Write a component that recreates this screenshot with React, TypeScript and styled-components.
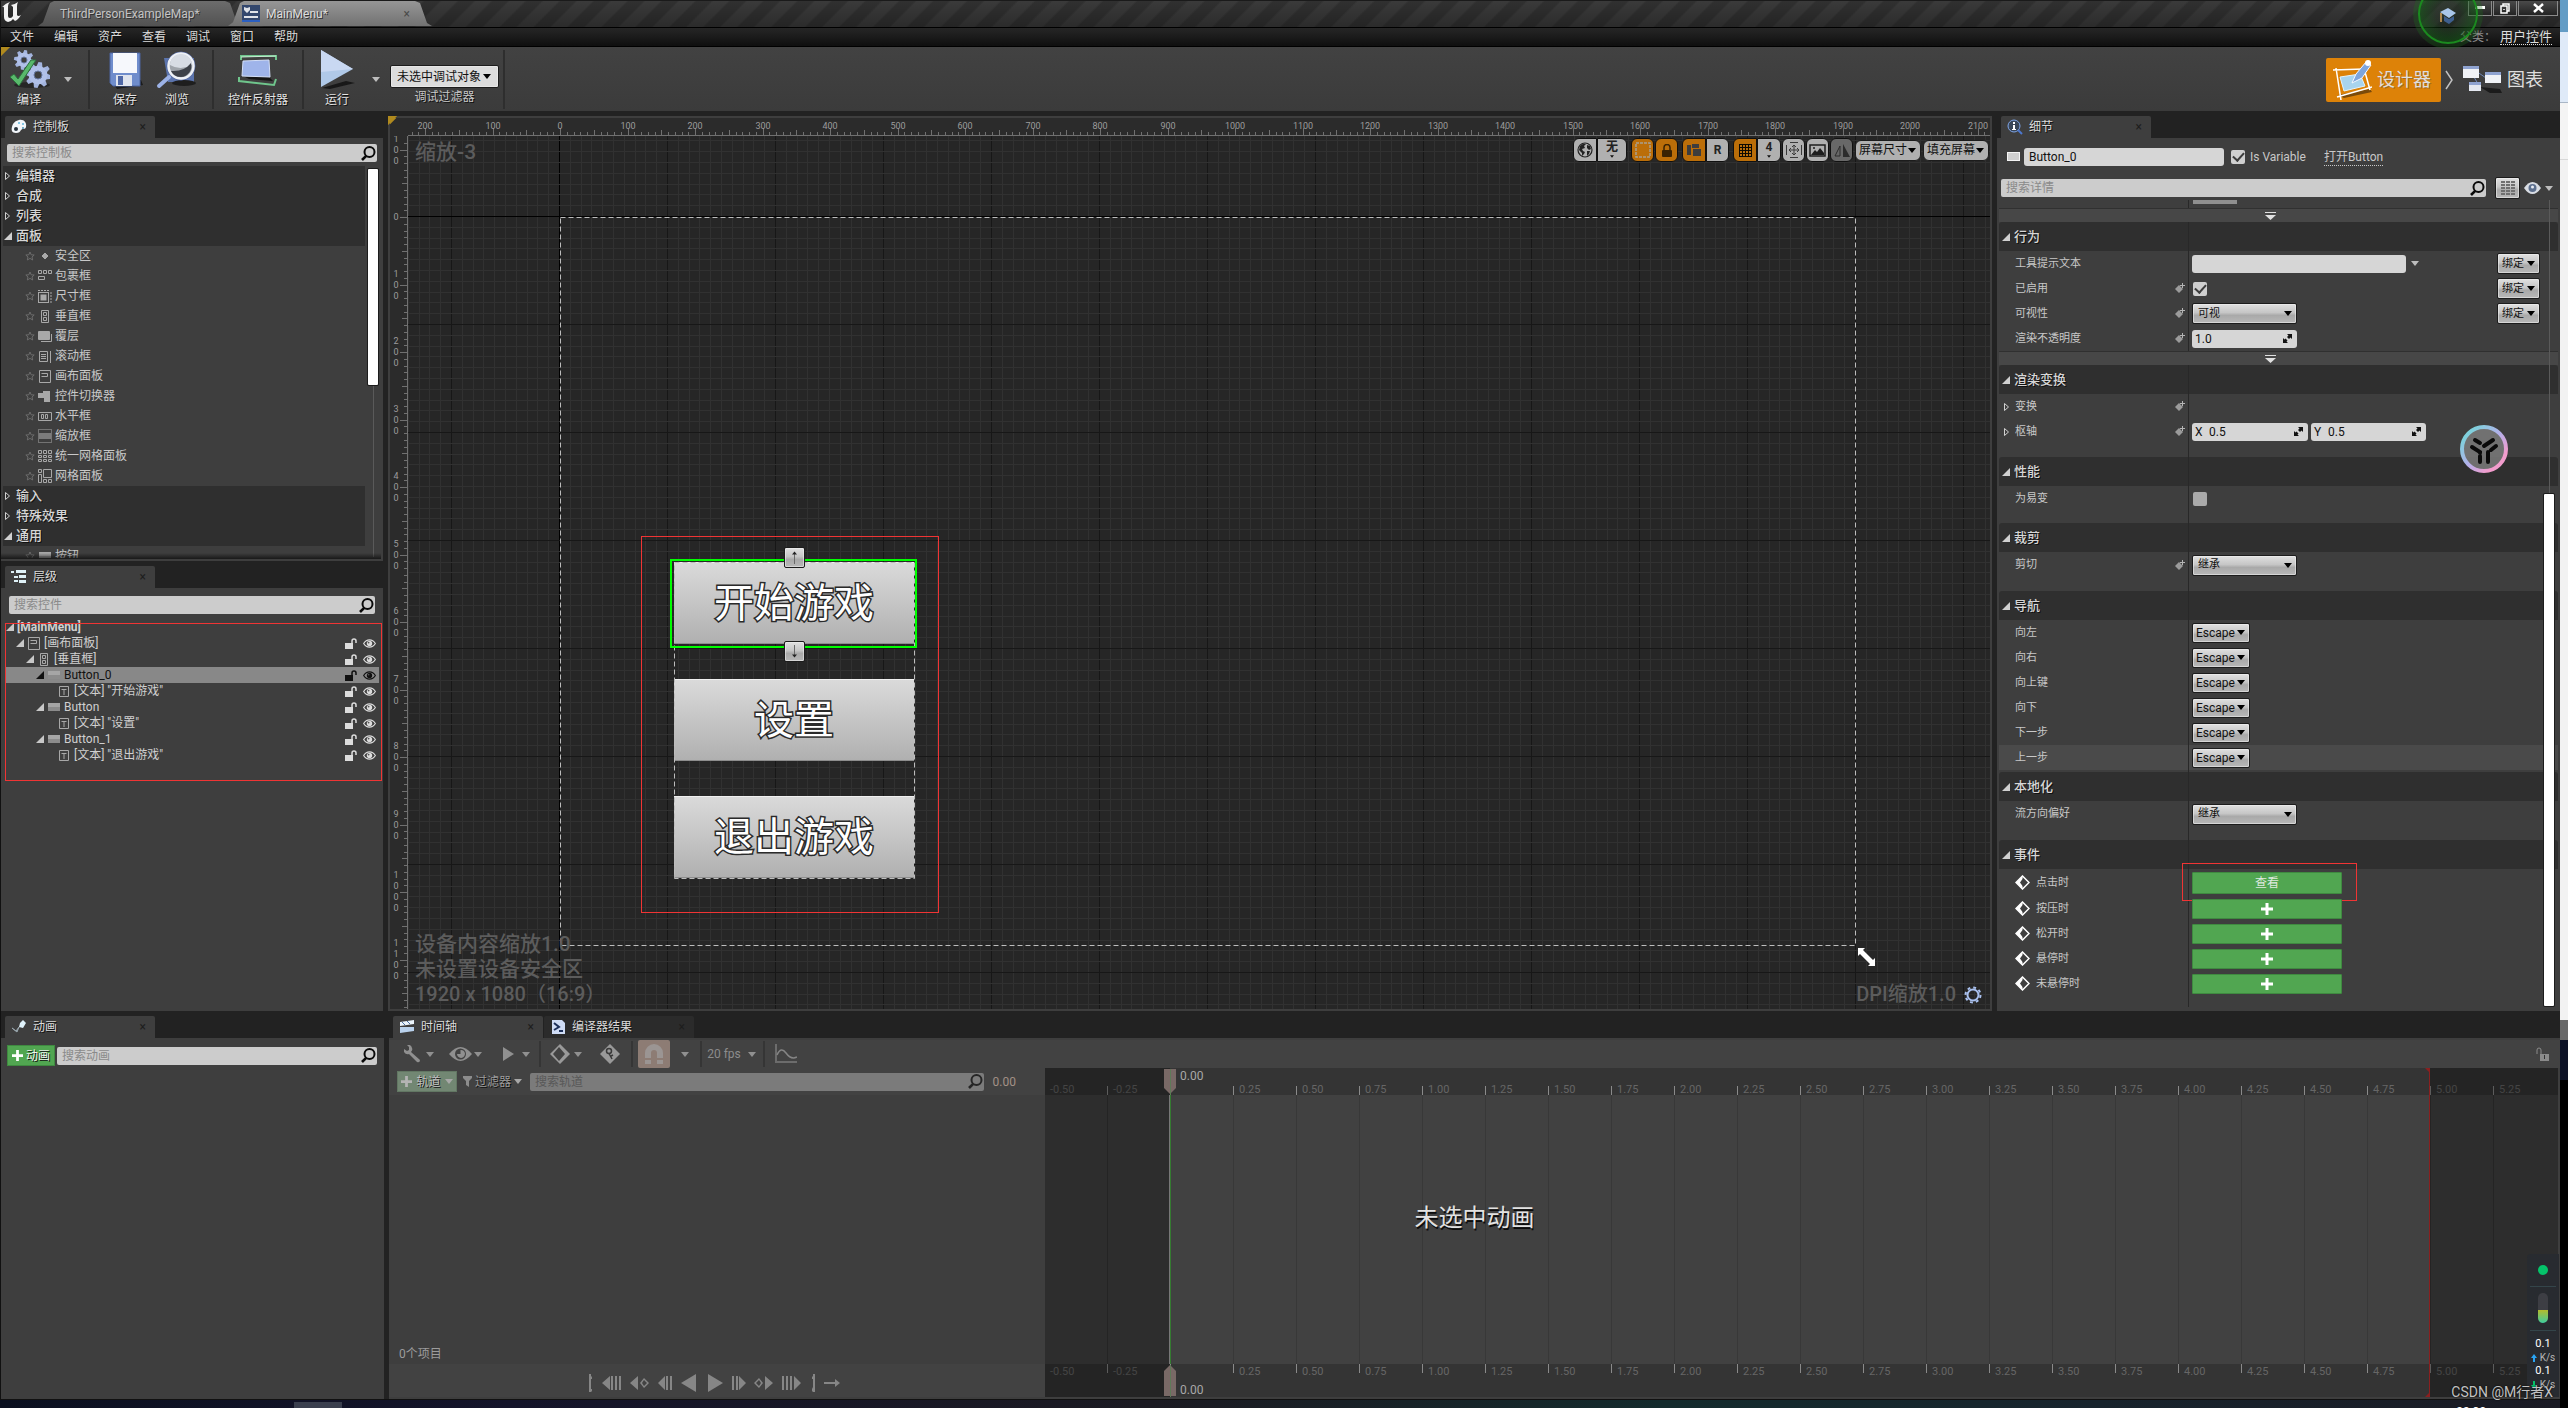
import React, { ReactNode } from "react";
import styled, { createGlobalStyle, css } from "styled-components";

const color = {
  gap: "#222222",
  panel: "#3e3e3e",
  section: "#2f2f2f",
  text: "#c8c8c8",
  bright: "#e4e4e4",
  field: "#cccccc",
  orange: "#dd8208",
  green: "#51a651",
  red: "#f03434",
};

const GlobalStyle = createGlobalStyle`
  * { box-sizing: border-box; }
  body { margin: 0; background: #000; overflow: hidden; }
  body, button, input, select {
    font-family: Roboto, "Noto Sans CJK SC", sans-serif;
    font-size: 12px;
    line-height: 16px;
    color: ${color.text};
  }
  button { padding: 0; border: 0; background: none; cursor: pointer; }
  ul { margin: 0; padding: 0; list-style: none; }
  svg { display: block; flex: none; }
`;

/* ---------- shared pieces ---------- */

const shadow = css`
  text-shadow: 1px 1px 0 #111;
`;

const raised = css`
  color: #111;
  background: linear-gradient(#e0e0e0, #c6c6c6 45%, #a9a9a9 60%, #b8b8b8);
  border: 1px solid #1c1c1c;
  border-radius: 2px;
  box-shadow: inset 0 0 0 1px rgba(240, 240, 240, 0.55);
`;

const Caret = ({ fill = "#bdbdbd", w = 8 }: { fill?: string; w?: number }) => (
  <svg width={w} height="5" viewBox="0 0 8 5">
    <path d="M0 0H8L4 5Z" fill={fill} />
  </svg>
);

const Expander = ({ open, fill = "#d0d0d0" }: { open?: boolean; fill?: string }) => (
  <svg width="8" height="8" viewBox="0 0 8 8">
    {open ? <path d="M8 0V8H0Z" fill={fill} /> : <path d="M1.5 .5V7.5L5.5 4Z" fill="none" stroke={fill} />}
  </svg>
);

const SearchShell = styled.label<{ $dim?: boolean }>`
  display: flex;
  align-items: center;
  flex: 1;
  min-width: 0;
  height: 18px;
  padding: 0 1px 0 5px;
  border-radius: 2px;
  background: ${(p) => (p.$dim ? "#7b7b7b" : color.field)};
  input {
    flex: 1;
    min-width: 0;
    height: 18px;
    padding: 0;
    border: 0;
    outline: 0;
    background: none;
  }
  input::placeholder {
    color: ${(p) => (p.$dim ? "#585858" : "#8a8a8a")};
    opacity: 1;
  }
`;

const Search = ({ hint, dim }: { hint: string; dim?: boolean }) => (
  <SearchShell $dim={dim}>
    <input type="text" placeholder={hint} aria-label={hint} />
    <svg width="15" height="15" viewBox="0 0 15 15" fill="none" stroke={dim ? "#262626" : "#0a0a0a"}>
      <circle cx="8.5" cy="6" r="5" strokeWidth="2" />
      <path d="M5.2 9.8L1 14" strokeWidth="2.6" />
    </svg>
  </SearchShell>
);

const SelectShell = styled.span<{ $w: number; $h: number; $pill?: boolean; $flat?: boolean }>`
  display: inline-grid;
  align-items: center;
  width: ${(p) => p.$w}px;
  height: ${(p) => p.$h}px;
  select {
    grid-area: 1 / 1;
    width: 100%;
    height: 100%;
    padding: 0 3px;
    appearance: none;
    ${raised}
    ${(p) => p.$flat && "background: #dcdcdc; padding: 0 6px;"}
    ${(p) => p.$pill && "background: #b0b0b0; border-radius: 6px; box-shadow: none;"}
  }
  svg {
    grid-area: 1 / 1;
    justify-self: end;
    margin-right: ${(p) => (p.$flat ? 8 : 5)}px;
    pointer-events: none;
  }
`;

type SelectProps = { label: string; value: string; w: number; h: number; pill?: boolean; flat?: boolean };
const Select = ({ label, value, w, h, pill, flat }: SelectProps) => (
  <SelectShell $w={w} $h={h} $pill={pill} $flat={flat}>
    <select aria-label={label} defaultValue={value}>
      <option>{value}</option>
    </select>
    <Caret fill="#000" />
  </SelectShell>
);

/* ---------- window frame ---------- */

const Desktop = styled.div`
  position: relative;
  display: grid;
  grid-template: minmax(0, 1fr) 9px / minmax(0, 1fr) 8px;
  height: 100vh;
  background: #000;
`;

const EdgeStrip = styled.div`
  grid-row: 1 / 3;
  grid-column: 2;
  background: linear-gradient(
    #639cc5 0 32px, #dfeaf8 32px 102px, #a9b6c6 102px 103px, #f4f4f4 103px 159px, #d8d8d8 159px 160px,
    #f2f2f2 160px 1020px, #686868 1020px 1040px, #0c1226 1040px 1080px, #000 1080px
  );
`;

const TaskStrip = styled.div`
  display: flex;
  justify-content: flex-end;
  height: 9px;
  overflow: hidden;
  border-top: 1px solid #111;
  color: #fff;
  padding: 4px 74px 0 0;
  background:
    linear-gradient(#3a3f4e, #3a3f4e) 294px 2px / 48px 7px no-repeat,
    linear-gradient(90deg, #0b1020, #14142a 20%, #1b1a22 45%, #132a2c 65%, #17232c 82%, #1a1a24);
`;

const Window = styled.div`
  display: flex;
  flex-direction: column;
  min-width: 0;
  min-height: 0;
  border-left: 1px solid #111;
  background: ${color.gap};
`;

const TitleBar = styled.header`
  display: flex;
  align-items: flex-start;
  height: 28px;
  border-bottom: 1px solid #000;
  background:
    linear-gradient(rgba(0, 0, 0, 0), rgba(0, 0, 0, 0.25)),
    repeating-linear-gradient(135deg, #3a3a3a 0 10px, #303030 12px 22px, #3a3a3a 24px);
  border-top: 1px solid #1a1a1a;
`;

const AppTab = styled.button<{ $on?: boolean }>`
  display: flex;
  align-items: center;
  gap: 6px;
  width: 204px;
  height: 25px;
  margin-left: ${(p) => (p.$on ? "-14px" : "14px")};
  padding: 0 22px 0 ${(p) => (p.$on ? "14px" : "22px")};
  color: ${(p) => (p.$on ? "#dcdcdc" : "#c4c4c4")};
  background: ${(p) => (p.$on ? "linear-gradient(#969696, #727272)" : "linear-gradient(#6c6c6c, #525252)")};
  clip-path: polygon(0 100%, 5px 85%, 12px 8%, 16px 0, 187px 0, 192px 8%, 199px 88%, 100% 100%);
  text-shadow: 1px 1px 0 #333;
  i { margin-left: auto; font-style: normal; color: #4a4a4a; text-shadow: none; }
`;

const WindowButtons = styled.div`
  display: flex;
  height: 15px;
  margin-left: auto;
  gap: 1px;
  margin-right: 2px;
  button {
    display: grid;
    place-items: center;
    width: 24px;
    height: 15px;
    border: 1px solid #8a8a8a;
    border-top: 0;
    background: linear-gradient(#4a4a4a, #232323);
  }
  button:last-child { width: 40px; }
`;

const Orb = styled.div`
  position: absolute;
  top: -16px;
  right: 90px;
  width: 60px;
  height: 60px;
  border: 2px solid #1b8a1f;
  border-radius: 50%;
  background: radial-gradient(circle, rgba(20, 60, 20, 0.2) 30%, rgba(20, 110, 24, 0.75));
  box-shadow: 0 0 0 5px rgba(30, 110, 30, 0.3);
  display: grid;
  place-items: center;
  padding-top: 4px;
  pointer-events: none;
`;

const MenuBar = styled.nav`
  display: flex;
  align-items: center;
  gap: 20px;
  height: 19px;
  padding: 0 8px 0 9px;
  background: linear-gradient(#262626, #0f0f0f);
  border-bottom: 1px solid #000;
  button { color: #dadada; height: 18px; ${shadow} }
`;

const ParentClass = styled.span`
  display: flex;
  margin-left: auto;
  color: #8c8c8c;
  a {
    margin-left: 4px;
    font-size: 13px;
    color: #dedede;
    text-decoration: none;
    border-bottom: 1px dotted #dedede;
    line-height: 15px;
  }
`;

/* ---------- main toolbar ---------- */

const MainBar = styled.div`
  display: flex;
  align-items: stretch;
  height: 64px;
  padding: 3px 13px 2px 0;
  background: linear-gradient(135deg, #b08a1e 6px, transparent 7px), linear-gradient(#424242, #3b3b3b);
`;

const ToolGroup = styled.div<{ $pad: string }>`
  display: flex;
  align-items: flex-start;
  padding: ${(p) => p.$pad};
  border-right: 2px solid #2e2e2e;
  &:last-of-type { border-right: 0; }
`;

const Tool = styled.button<{ $w: number }>`
  display: flex;
  flex-direction: column;
  align-items: center;
  gap: 2px;
  width: ${(p) => p.$w}px;
  color: ${color.bright};
  ${shadow}
`;

const DropArrow = styled.button`
  display: grid;
  place-items: center;
  width: 20px;
  height: 59px;
`;

const DebugFilter = styled.div`
  display: flex;
  flex-direction: column;
  align-items: center;
  gap: 1px;
  padding: 15px 0 0 4px;
  color: ${color.text};
  ${shadow}
`;

const Modes = styled.div`
  display: flex;
  align-items: center;
  margin-left: auto;
  button {
    display: flex;
    align-items: center;
    gap: 5px;
    height: 44px;
    font-size: 18px;
    line-height: 24px;
    color: #dedede;
    border-radius: 2px;
    text-shadow: 1px 1px 0 #4446;
  }
  button:first-child { width: 115px; padding-left: 6px; background: ${color.orange}; margin-right: 4px; }
  button:last-child { margin-left: 9px; padding-right: 4px; }
`;

const GearShape = ({ x, y, r, hole }: { x: number; y: number; r: number; hole: number }) => (
  <g transform={`translate(${x} ${y})`}>
    {[10, 55, 100, 145].map((a) => (
      <path
        key={a}
        d={`M${-r * 0.14} ${-r}H${r * 0.14}L${r * 0.24} ${-r * 0.6}V${r * 0.6}L${r * 0.14} ${r}H${-r * 0.14}L${-r * 0.24} ${r * 0.6}V${-r * 0.6}Z`}
        fill="#a3b4de"
        transform={`rotate(${a})`}
      />
    ))}
    <circle r={r * 0.72} fill="#b0c0e8" />
    <circle r={hole} fill="#3e3e3e" stroke="#66779f" />
  </g>
);

const CompileIcon = () => (
  <svg width="42" height="40" viewBox="0 0 42 40">
    <ellipse cx="24" cy="35" rx="18" ry="3" fill="#262626" />
    <GearShape x={16} y={10} r={10} hole={3} />
    <GearShape x={30} y={25} r={13} hole={4} />
    <path d="M2 27L6 24L10 29L23 10L28 10L11 36Z" fill="#58b96b" stroke="#2c6f3c" />
  </svg>
);
const SaveIcon = () => (
  <svg width="36" height="40" viewBox="0 0 36 40">
    <path d="M6 33L34 30L36 35L10 39Z" fill="#1c1c1c" />
    <path d="M3 3H33V36H6L3 33Z" fill="#6f8dcc" stroke="#4c64a0" />
    <rect x="6" y="3" width="24" height="20" fill="#f6f8fc" />
    <rect x="9" y="25" width="16" height="11" fill="#dfe4ee" />
    <rect x="11" y="26" width="5" height="9" fill="#4f68a6" />
  </svg>
);
const BrowseIcon = () => (
  <svg width="42" height="40" viewBox="0 0 42 40">
    <path d="M8 8H38V32H12Z" fill="#5b74ad" />
    <ellipse cx="28" cy="33" rx="12" ry="3" fill="#1e1e1e" />
    <circle cx="25" cy="16" r="14" fill="#8d9299" stroke="#4c62a0" />
    <circle cx="25" cy="16" r="12.500" fill="#9fa4ab" stroke="#eef1f6" strokeWidth="2.500" />
    <path d="M14 15A11 11 0 0 1 36 15Q24 21 14 15Z" fill="#d7dce4" />
    <path d="M15 21Q28 22 35 13A11 11 0 0 1 25 27Q18 27 15 21Z" fill="#3d4148" />
    <path d="M13 27L3 36" stroke="#9cb2e6" strokeWidth="4" strokeLinecap="round" />
  </svg>
);
const ReflectorIcon = () => (
  <svg width="42" height="40" viewBox="0 0 42 40" fill="none">
    <path d="M8 27L32 27L36 31L12 29Z" fill="#151515" />
    <path d="M4 10V6H39V10" stroke="#6fc58c" strokeWidth="2" />
    <path d="M4 7L39 6" stroke="#c8ecd4" />
    <path d="M2 27V31L37 35L39 29" stroke="#6fc58c" strokeWidth="2" />
    <path d="M6 11L32 10L33 27L5 26Z" fill="#9fb4ea" stroke="#d4dff8" />
  </svg>
);
const PlayIcon = () => (
  <svg width="42" height="40" viewBox="0 0 42 40">
    <path d="M6 38L30 31L39 33L14 39Z" fill="#181818" />
    <path d="M5 0L37 19L5 37Z" fill="#b0c9e8" />
    <path d="M5 0L37 19L5 22Z" fill="#c9d8f2" />
  </svg>
);
const DesignerIcon = () => (
  <svg width="40" height="40" viewBox="0 0 40 40" fill="none">
    <path d="M6 35L38 29L40 32L12 38Z" fill="#7a4a0a" />
    <path d="M1 10L32 9M5 37L40 27M4 8L9 40M33 12L38 30" stroke="#fff" strokeWidth="1.500" />
    <path d="M8 17L28 14L33 26L12 31Z" fill="#a8d4ee" stroke="#e2f3fc" />
    <path d="M20 23L24 14L34 2L39 5L30 18Z" fill="#7ea5dc" stroke="#f6f9ff" />
    <circle cx="36" cy="3" r="3" fill="#fff" />
  </svg>
);
const GraphIcon = () => (
  <svg width="40" height="30" viewBox="0 0 40 30">
    <path d="M18 22L38 24L40 28L28 28Z" fill="#1b1b1b" />
    <path d="M14 6L24 13M12 12L16 19" stroke="#6f87b8" />
    <rect x="1" y="1" width="16" height="12" fill="#f0f2f6" />
    <rect x="1" y="1" width="16" height="3" fill="#8fa3d0" />
    <rect x="23" y="7" width="16" height="11" fill="#f0f2f6" />
    <rect x="23" y="7" width="16" height="3" fill="#8fa3d0" />
    <rect x="7" y="17" width="12" height="9" fill="#e4e8f0" />
    <rect x="7" y="17" width="12" height="3" fill="#8fa3d0" />
  </svg>
);

/* ---------- docked panels ---------- */

const Workspace = styled.main`
  display: flex;
  flex-direction: column;
  flex: 1;
  min-height: 0;
  gap: 5px;
  padding-top: 5px;
`;

const UpperRow = styled.div`
  display: grid;
  grid-template-columns: 382px minmax(0, 1fr) 563px;
  gap: 5px;
  flex: 1;
  min-height: 0;
`;

const LowerRow = styled.div`
  display: grid;
  grid-template-columns: 383px minmax(0, 1fr);
  gap: 5px;
  height: 383px;
`;

const LeftStack = styled.div`
  display: grid;
  grid-template-rows: 1fr 1fr;
  gap: 5px;
  min-height: 0;
`;

const Dock = styled.section`
  display: flex;
  flex-direction: column;
  min-width: 0;
  min-height: 0;
`;

const DockTabs = styled.div`
  display: flex;
  gap: 1px;
  padding-left: 4px;
`;

const DockTab = styled.button<{ $off?: boolean }>`
  display: flex;
  align-items: center;
  gap: 6px;
  width: 150px;
  height: 22px;
  padding: 0 9px 0 6px;
  color: #dadada;
  border-radius: 2px 2px 0 0;
  background: ${(p) => (p.$off ? "#2b2b2b" : color.panel)};
  ${shadow}
  i { margin-left: auto; font-style: normal; color: #1d1d1d; text-shadow: none; }
`;

const DockBody = styled.div`
  position: relative;
  display: flex;
  flex-direction: column;
  flex: 1;
  min-height: 0;
  background: ${color.panel};
`;

const TabIcon = ({ kind }: { kind: string }) => (
  <svg width="16" height="16" viewBox="0 0 16 16">
    {kind === "palette" && (
      <g>
        <path d="M8 1C13 0 16 4 15 8C14 11 12 9 10 11C9 13 8 14 5 14C1 14 0 11 1 8C2 4 4 2 8 1Z" fill="#f2f6fa" />
        <circle cx="5" cy="10" r="2" fill="#28353f" />
        <circle cx="8" cy="4" r="1" fill="#5fb6dc" />
        <circle cx="12" cy="5" r="1" fill="#5fb6dc" />
        <circle cx="12" cy="9" r="1" fill="#4a8fb0" />
      </g>
    )}
    {kind === "tree" && (
      <g fill="#dff1f7">
        <path d="M0 2H3V4H0ZM5 1H15V4H5ZM3 7H7V9H3ZM8 6H15V9H8ZM3 11H7V13H3ZM8 11H15V14H8Z" />
      </g>
    )}
    {kind === "anim" && (
      <g>
        <path d="M1 9L6 13L8 8L5 12Z" fill="#98a5ac" stroke="#98a5ac" />
        <path d="M9 4L12 1L15 4L12 9L8 8Z" fill="#dff2fa" />
      </g>
    )}
    {kind === "clip" && (
      <g>
        <path d="M1 3L15 1V5L1 7Z" fill="#eaf3fb" />
        <path d="M3 3L6 6M8 2L11 5" stroke="#4b6fa0" />
        <path d="M1 8H15V12L1 14Z" fill="#b9d1ec" />
      </g>
    )}
    {kind === "results" && (
      <g>
        <path d="M2 1H12L15 4V15H2Z" fill="#cfdcf5" />
        <path d="M4 4L9 8L4 11M9 12H13" stroke="#1c2f5a" strokeWidth="2" fill="none" />
      </g>
    )}
    {kind === "details" && (
      <g>
        <circle cx="7" cy="7" r="6" fill="#3a4657" stroke="#7ea5e8" />
        <path d="M11 11L15 15" stroke="#4d78d0" strokeWidth="2" />
        <path d="M6 3H8V5H6ZM6 6H8V10H9V11H5V10H6Z" fill="#fff" />
      </g>
    )}
  </svg>
);

const Tab = ({ icon, children, off }: { icon: string; children: ReactNode; off?: boolean }) => (
  <DockTab $off={off}>
    <TabIcon kind={icon} />
    {children}
    <i>×</i>
  </DockTab>
);

const SearchRow = styled.div<{ $pad: string }>`
  display: flex;
  align-items: center;
  gap: 2px;
  padding: ${(p) => p.$pad};
`;

/* ---------- palette ---------- */

const PaletteList = styled.ul`
  flex: 1;
  min-height: 0;
  overflow: hidden;
  margin: 0 18px 3px 2px;
`;

const PaletteGroup = styled.li`
  display: flex;
  align-items: center;
  gap: 4px;
  height: 20px;
  padding-left: 1px;
  background: ${color.section};
  font-size: 13px;
  font-weight: 500;
  color: #d6d6d6;
  ${shadow}
`;

const PaletteItem = styled.li`
  display: flex;
  align-items: center;
  gap: 3px;
  height: 20px;
  padding-left: 22px;
`;

const ScrollTrack = styled.div<{ $top: number; $bottom: number; $right: number }>`
  position: absolute;
  top: ${(p) => p.$top}px;
  bottom: ${(p) => p.$bottom}px;
  right: ${(p) => p.$right}px;
  width: 10px;
  background: linear-gradient(#5a5a5a, #5a5a5a) 5px 0 / 1px 100% no-repeat;
`;

const ScrollThumb = styled.div<{ $size: string; $end?: boolean }>`
  position: absolute;
  left: 0;
  right: 0;
  ${(p) => (p.$end ? "bottom: 0;" : "top: 0;")}
  height: ${(p) => p.$size};
  background: #fff;
  border-radius: 1px;
  box-shadow: 0 0 0 1px #1c1c1c;
`;

const FadeEdge = styled.div`
  position: absolute;
  left: 0;
  right: 2px;
  bottom: 2px;
  height: 6px;
  background: linear-gradient(transparent, rgba(0, 0, 0, 0.6));
`;

const glyphs: Record<string, ReactNode> = {
  safe: <path d="M7 4L10 7L7 10L4 7Z" fill="#a8a8a8" />,
  wrap: <path d="M.5 1.5H3.5V4.5H.5ZM5.5 1.5H8.5V4.5H5.5ZM10.5 1.5H13.5V4.5H10.5ZM.5 7.5H6.5V10.5H.5Z" />,
  size: (
    <g>
      <rect x=".5" y="3.5" width="10" height="10" />
      <rect x="3" y="6" width="5" height="5" fill="#a8a8a8" />
      <path d="M0 1.5H11M13 3V14" strokeDasharray="2 1" />
    </g>
  ),
  vbox: <path d="M3.5 1.5H10.5V13.5H3.5ZM5.5 3.5H8.5V6.5H5.5ZM5.5 8.5H8.5V11.5H5.5Z" />,
  overlay: (
    <g>
      <rect x="0" y="2" width="12" height="9" rx="1" fill="#a8a8a8" stroke="none" />
      <path d="M13.5 5V12.5H3" />
    </g>
  ),
  scroll: <path d="M1.5 2.5H9.5V12.5H1.5ZM3 5.5H8M3 7.5H8M3 9.5H8M12.5 2V14" />,
  canvas: <path d="M1.5 1.5H12.5V13.5H1.5ZM3.5 4.5H9.5V7.5H3.5" />,
  switcher: <path d="M5 2H12V13H6V9H0V4H5Z" fill="#a8a8a8" stroke="none" />,
  hbox: <path d="M.5 3.5H13.5V11.5H.5ZM3.5 5.5H5.5V9.5H3.5ZM7.5 5.5H9.5V9.5H7.5Z" />,
  scale: (
    <g>
      <rect x=".5" y=".5" width="13" height="13" strokeDasharray="1 1" />
      <rect x="1" y="4" width="12" height="6" fill="#7c7c7c" stroke="none" />
    </g>
  ),
  uniform: (
    <path d="M.5 1.5H3.5V4.5H.5ZM5.5 1.5H8.5V4.5H5.5ZM10.5 1.5H13.5V4.5H10.5ZM.5 6.5H3.5V8.5H.5ZM5.5 6.5H8.5V8.5H5.5ZM10.5 6.5H13.5V8.5H10.5ZM.5 10.5H3.5V12.5H.5ZM5.5 10.5H8.5V12.5H5.5ZM10.5 10.5H13.5V12.5H10.5Z" />
  ),
  grid: <path d="M.5 .5H3.5V3.5H.5ZM5.5 .5H13.5V8.5H5.5ZM.5 5.5H3.5V13.5H.5ZM5.5 10.5H8.5V13.5H5.5ZM10.5 10.5H13.5V13.5H10.5Z" />,
  button: (
    <g stroke="none">
      <rect x="1" y="3" width="12" height="8" fill="#8c8c8c" />
      <rect x="1" y="3" width="12" height="4" fill="#a6a6a6" />
    </g>
  ),
  text: <path d="M2.5 2.5H11.5V12.5H2.5ZM4.5 5.5H9.5M7 5.5V11" />,
};

const Glyph = ({ kind }: { kind: string }) => (
  <svg width="14" height="14" viewBox="0 0 14 14" fill="none" stroke="#a8a8a8">
    {glyphs[kind]}
  </svg>
);

const Star = () => (
  <svg width="10" height="10" viewBox="0 0 10 10" fill="none" stroke="#6c6c6c">
    <path d="M5 1L6.2 3.8L9.2 4L7 6L7.7 9L5 7.4L2.3 9L3 6L.8 4L3.8 3.8Z" />
  </svg>
);

const paletteItems: [string, string][] = [
  ["safe", "安全区"],
  ["wrap", "包裹框"],
  ["size", "尺寸框"],
  ["vbox", "垂直框"],
  ["overlay", "覆层"],
  ["scroll", "滚动框"],
  ["canvas", "画布面板"],
  ["switcher", "控件切换器"],
  ["hbox", "水平框"],
  ["scale", "缩放框"],
  ["uniform", "统一网格面板"],
  ["grid", "网格面板"],
];

const PaletteEntry = ({ icon, name }: { icon: string; name: string }) => (
  <PaletteItem>
    <Star />
    <Glyph kind={icon} />
    {name}
  </PaletteItem>
);

const Palette = () => (
  <Dock>
    <DockTabs>
      <Tab icon="palette">控制板</Tab>
    </DockTabs>
    <DockBody>
      <SearchRow $pad="6px 6px 4px 6px">
        <Search hint="搜索控制板" />
      </SearchRow>
      <PaletteList>
        {["编辑器", "合成", "列表"].map((n) => (
          <PaletteGroup key={n}>
            <Expander />
            {n}
          </PaletteGroup>
        ))}
        <PaletteGroup>
          <Expander open />
          面板
        </PaletteGroup>
        {paletteItems.map(([icon, name]) => (
          <PaletteEntry key={name} icon={icon} name={name} />
        ))}
        {["输入", "特殊效果"].map((n) => (
          <PaletteGroup key={n}>
            <Expander />
            {n}
          </PaletteGroup>
        ))}
        <PaletteGroup>
          <Expander open />
          通用
        </PaletteGroup>
        <PaletteEntry icon="button" name="按钮" />
      </PaletteList>
      <ScrollTrack $top={31} $bottom={4} $right={5}>
        <ScrollThumb $size="216px" />
      </ScrollTrack>
      <FadeEdge />
    </DockBody>
  </Dock>
);

/* ---------- hierarchy ---------- */

const Tree = styled.ul`
  padding: 0 4px 0 5px;
`;

const TreeRow = styled.li<{ $level: number; $on?: boolean }>`
  display: flex;
  align-items: center;
  gap: 3px;
  height: 16px;
  padding: 0 3px 0 ${(p) => p.$level * 10}px;
  color: ${(p) => (p.$on ? "#111" : "#d0d0d0")};
  background: ${(p) => (p.$on ? "#888888" : "none")};
  font-weight: ${(p) => (p.$level === 0 ? 700 : 400)};
  > span:first-child { width: 8px; }
  > div { display: flex; gap: 6px; margin-left: auto; }
`;

const Highlight = styled.div<{ $inset: string }>`
  position: absolute;
  inset: ${(p) => p.$inset};
  border: 1px solid ${color.red};
  pointer-events: none;
`;

const Lock = ({ fill }: { fill: string }) => (
  <svg width="12" height="11" viewBox="0 0 12 11">
    <rect x="0" y="5" width="8" height="6" fill={fill} />
    <path d="M7 6V3A2 2 0 0 1 11 3V5" fill="none" stroke={fill} strokeWidth="1.5" />
  </svg>
);
const Eye = ({ fill }: { fill: string }) => (
  <svg width="13" height="9" viewBox="0 0 14 10">
    <path d="M.5 5Q3 1 7 1T13.5 5Q11 9 7 9T.5 5Z" fill="none" stroke={fill} strokeWidth="1.3" />
    <circle cx="7" cy="5" r="3" fill={fill} />
    <circle cx="6" cy="4" r="1" fill="#555" />
  </svg>
);

type Node = { level: number; label: string; icon?: string; leaf?: boolean; on?: boolean };
const nodes: Node[] = [
  { level: 0, label: "[MainMenu]" },
  { level: 1, label: "[画布面板]", icon: "canvas" },
  { level: 2, label: "[垂直框]", icon: "vbox" },
  { level: 3, label: "Button_0", icon: "button", on: true },
  { level: 4, label: "[文本] \"开始游戏\"", icon: "text", leaf: true },
  { level: 3, label: "Button", icon: "button" },
  { level: 4, label: "[文本] \"设置\"", icon: "text", leaf: true },
  { level: 3, label: "Button_1", icon: "button" },
  { level: 4, label: "[文本] \"退出游戏\"", icon: "text", leaf: true },
];

const IconButton = styled.button`
  display: grid;
  place-items: center;
  min-width: 12px;
  height: 14px;
`;

const Hierarchy = () => (
  <Dock>
    <DockTabs>
      <Tab icon="tree">层级</Tab>
    </DockTabs>
    <DockBody>
      <SearchRow $pad="8px 8px 5px 8px">
        <Search hint="搜索控件" />
      </SearchRow>
      <Tree>
        {nodes.map((n, i) => {
          const ink = n.on ? "#111" : "#dcdcdc";
          return (
            <TreeRow key={i} $level={n.level} $on={n.on}>
              <span>{!n.leaf && <Expander open fill={n.on ? "#111" : "#c8c8c8"} />}</span>
              {n.icon && <Glyph kind={n.icon} />}
              {n.label}
              {n.level > 0 && (
                <div>
                  <IconButton aria-label="锁定">
                    <Lock fill={ink} />
                  </IconButton>
                  <IconButton aria-label="可视">
                    <Eye fill={ink} />
                  </IconButton>
                </div>
              )}
            </TreeRow>
          );
        })}
      </Tree>
      <Highlight $inset="35px 1px auto 4px" style={{ height: nodes.length * 16 + 14 }} />
    </DockBody>
  </Dock>
);

/* ---------- designer viewport ---------- */

const SCALE = 0.675;
const ORIGIN_X = 152;
const ORIGIN_Y = 81;

const ViewportFrame = styled.section`
  display: grid;
  grid-template: 18px minmax(0, 1fr) / 18px minmax(0, 1fr);
  padding: 2px;
  min-width: 0;
  min-height: 0;
  background: linear-gradient(135deg, #b08a1e 6px, transparent 7px), #3e3e3e;
  > svg { background: #2b2b2b; width: 100%; height: 100%; overflow: hidden; }
`;

const Corner = styled.div`
  background: linear-gradient(135deg, #b08a1e 4px, #2b2b2b 5px);
`;

const Surface = styled.div`
  position: relative;
  overflow: hidden;
  background: #262626;
`;

const GridDrawing = styled.svg`
  position: absolute;
  inset: 0;
  width: 100%;
  height: 100%;
`;

const range = (from: number, to: number) => Array.from({ length: to - from + 1 }, (_, i) => from + i);

const TopRuler = () => (
  <svg>
    {range(-22, 360).map((i) => {
      const x = Math.round(ORIGIN_X + i * 10 * SCALE);
      const h = i % 10 === 0 ? 7 : i % 5 === 0 ? 5 : 3;
      return <rect key={i} x={x} y={17 - h} width="1" height={h} fill="#707070" />;
    })}
    <rect x="0" y="17" width="100%" height="1" fill="#707070" />
    {range(-2, 21).map((i) => (
      <text key={i} x={Math.round(ORIGIN_X + i * 100 * SCALE)} y="11" fontSize="9" textAnchor="middle" fill="#9c9c9c">
        {Math.abs(i * 100)}
      </text>
    ))}
  </svg>
);

const SideRuler = () => (
  <svg>
    {range(-11, 220).map((i) => {
      const y = Math.round(ORIGIN_Y + i * 10 * SCALE);
      const w = i % 10 === 0 ? 7 : i % 5 === 0 ? 5 : 3;
      return <rect key={i} x={17 - w} y={y} width={w} height="1" fill="#707070" />;
    })}
    <rect x="17" y="0" width="1" height="100%" fill="#707070" />
    {range(-1, 11).map((i) => {
      const digits = String(Math.abs(i * 100)).split("");
      const mid = Math.round(ORIGIN_Y + i * 100 * SCALE) - Math.round((digits.length - 1) * 5.5) + 3;
      return digits.map((d, k) => (
        <text key={`${i}.${k}`} x="6" y={mid + k * 11} fontSize="9" textAnchor="middle" fill="#9c9c9c">
          {d}
        </text>
      ));
    })}
  </svg>
);

const GridLines = () => {
  const lines = (origin: number, count: number, vertical: boolean) =>
    range(-14, count)
      .sort((a, b) => Number(a % 10 === 0) - Number(b % 10 === 0))
      .map((i) => {
        const at = Math.round(origin + i * 16 * SCALE) - 1;
        const fill = i === 0 ? "#000" : i % 10 === 0 ? "#171717" : "#313131";
        return vertical ? (
          <rect key={`v${i}`} x={at} y="0" width="1" height="100%" fill={fill} />
        ) : (
          <rect key={`h${i}`} x="0" y={at} width="100%" height="1" fill={fill} />
        );
      });
  return (
    <GridDrawing aria-hidden>
      {lines(ORIGIN_X, 300, true)}
      {lines(ORIGIN_Y, 140, false)}
    </GridDrawing>
  );
};

const Stage = styled.div`
  position: absolute;
  left: ${ORIGIN_X}px;
  top: ${ORIGIN_Y}px;
  width: 1295px;
  height: 728px;
`;

const Dashes = () => (
  <GridDrawing aria-hidden>
    <rect x="0.5" y="0.5" width="100%" height="100%" fill="none" stroke="#bdbdbd" strokeDasharray="5 3" />
  </GridDrawing>
);
const DashFrame = styled.div`
  position: absolute;
  inset: 0;
  pointer-events: none;
  svg { overflow: visible; }
`;

const MenuBox = styled.div`
  position: absolute;
  left: 114px;
  top: 345px;
  width: 240px;
  display: grid;
  gap: 35px;
`;

const GameButton = styled.button`
  height: 82px;
  padding-top: 2px;
  font-size: 40px;
  line-height: 48px;
  color: #fff;
  -webkit-text-stroke: 3px #2a2a2a;
  paint-order: stroke fill;
  background: linear-gradient(#dadada, #d2d2d2 20%, #b0b0b0);
  box-shadow: inset 0 1px 0 #efefef;
  border-bottom: 1px solid #8d8d8d;
`;

const Selection = styled.div`
  position: absolute;
  inset: -3px -3px auto -4px;
  height: 89px;
  border: 2px solid #00ff00;
  pointer-events: none;
`;

const MoveButton = styled.button<{ $top: number }>`
  position: absolute;
  left: 110px;
  top: ${(p) => p.$top}px;
  width: 21px;
  height: 21px;
  display: grid;
  place-items: center;
  ${raised}
`;

const ArrowV = ({ down }: { down?: boolean }) => (
  <svg width="7" height="13" viewBox="0 0 7 13">
    <g transform={down ? "rotate(180 3.5 6.5)" : undefined}>
      <path d="M3.5 2V13" stroke="#6a6a6a" />
      <path d="M1 3.5L3.5 0.5L6 3.5Z" fill="#222" />
    </g>
  </svg>
);

const Caption = styled.div<{ $place: string }>`
  position: absolute;
  ${(p) => p.$place}
  font-size: 21px;
  line-height: 25px;
  font-weight: 500;
  color: #5c5c5c;
  span { display: block; }
  span:last-child { font-size: 20px; }
`;

const DpiNote = styled.div`
  position: absolute;
  right: 8px;
  bottom: 2px;
  display: flex;
  align-items: center;
  gap: 8px;
  font-size: 20px;
  line-height: 25px;
  font-weight: 500;
  color: #5c5c5c;
`;

const ViewBar = styled.div`
  position: absolute;
  top: 2px;
  right: 1px;
  display: flex;
  align-items: center;
  gap: 4px;
`;

const Cluster = styled.div<{ $gap?: number }>`
  display: flex;
  align-items: center;
  gap: ${(p) => p.$gap ?? 0}px;
`;

const ViewButton = styled.button<{ $on?: boolean; $side?: "l" | "r"; $off?: boolean; $w?: number }>`
  display: flex;
  flex-direction: column;
  align-items: center;
  justify-content: center;
  width: ${(p) => p.$w ?? 23}px;
  height: 24px;
  font-weight: 700;
  line-height: 13px;
  color: #222;
  border: 1px solid #101010;
  border-radius: ${(p) => (p.$side === "l" ? "6px 0 0 6px" : p.$side === "r" ? "0 6px 6px 0" : "6px")};
  background: ${(p) => (p.$on ? "#bb6e09" : p.$off ? "#686868" : "#b0b0b0")};
`;

const Globe = () => (
  <svg width="16" height="16" viewBox="0 0 16 16">
    <circle cx="8" cy="8" r="7" fill="none" stroke="#222" strokeWidth="1.2" />
    <path d="M3 4Q6 1 9 2L7 4L8 6L5 7L6 9L8 10L7 12L5 14L5 11L2 8ZM10 3L13 4L14 7L12 8L10 6ZM10 9L13 9L12 12L10 14Z" fill="#222" />
  </svg>
);

const ResizeGrip = styled.div`
  position: absolute;
  left: 100%;
  top: 100%;
  padding: 3px;
`;

const Viewport = () => (
  <ViewportFrame>
    <Corner />
    <TopRuler />
    <SideRuler />
    <Surface>
      <GridLines />
      <Caption $place="left: 7px; top: 4px;">缩放-3</Caption>
      <Stage>
        <DashFrame>
          <Dashes />
        </DashFrame>
        <MenuBox>
          <DashFrame>
            <Dashes />
          </DashFrame>
          <GameButton>开始游戏</GameButton>
          <GameButton>设置</GameButton>
          <GameButton>退出游戏</GameButton>
          <Selection />
          <MoveButton $top={-15} aria-label="上移">
            <ArrowV />
          </MoveButton>
          <MoveButton $top={79} aria-label="下移">
            <ArrowV down />
          </MoveButton>
          <Highlight $inset="-26px -25px -35px -33px" />
        </MenuBox>
        <ResizeGrip>
          <svg width="18" height="18" viewBox="0 0 18 18">
            <path d="M0 0H7L5 2L15 12L17 10V18H10L12 16L2 6L0 8Z" fill="#fff" />
          </svg>
        </ResizeGrip>
      </Stage>
      <Caption $place="left: 7px; bottom: 2px;">
        <span>设备内容缩放1.0</span>
        <span>未设置设备安全区</span>
        <span>1920 x 1080（16:9）</span>
      </Caption>
      <DpiNote>
        DPI缩放1.0
        <svg width="18" height="18" viewBox="0 0 18 18" fill="none" stroke="#a9c0ee">
          <circle cx="9" cy="9" r="5.5" strokeWidth="2" />
          <circle cx="9" cy="9" r="7.5" strokeWidth="2" strokeDasharray="2.9 2.99" />
        </svg>
      </DpiNote>
      <ViewBar>
        <Cluster>
          <ViewButton $side="l" $w={24} aria-label="本地化">
            <Globe />
          </ViewButton>
          <ViewButton $side="r" $w={30}>
            无
            <Caret fill="#111" w={4} />
          </ViewButton>
        </Cluster>
        <Cluster $gap={1}>
          <ViewButton $on aria-label="虚线轮廓">
            <svg width="16" height="16" viewBox="0 0 16 16">
              <rect x="1" y="1" width="14" height="14" fill="none" stroke="#a9a08f" strokeWidth="1.5" strokeDasharray="3 1" />
            </svg>
          </ViewButton>
          <ViewButton $on aria-label="锁定">
            <svg width="12" height="13" viewBox="0 0 12 13">
              <rect x="1" y="6" width="10" height="7" rx="1" fill="#3a2303" />
              <path d="M3 6V3.5A3 3 0 0 1 9 3.5V6" fill="none" stroke="#3a2303" strokeWidth="1.5" />
            </svg>
          </ViewButton>
        </Cluster>
        <Cluster>
          <ViewButton $on $side="l" $w={24} aria-label="布局">
            <svg width="14" height="12" viewBox="0 0 14 12" fill="#3d3d3d">
              <path d="M0 1H4V11H0ZM5 0H12V4H5ZM6 5H14V12H6Z" />
            </svg>
          </ViewButton>
          <ViewButton $side="r">R</ViewButton>
        </Cluster>
        <Cluster $gap={1}>
          <Cluster>
            <ViewButton $on $side="l" $w={24} aria-label="网格对齐">
              <svg width="13" height="13" viewBox="0 0 13 13" stroke="#0e0a02">
                <path d="M.5 0V13M3.5 0V13M6.5 0V13M9.5 0V13M12.5 0V13M0 .5H13M0 3.5H13M0 6.5H13M0 9.5H13M0 12.5H13" />
              </svg>
            </ViewButton>
            <ViewButton $side="r" $w={24}>
              4
              <Caret fill="#111" w={4} />
            </ViewButton>
          </Cluster>
          <ViewButton aria-label="缩放到合适">
            <svg width="16" height="16" viewBox="0 0 16 16" fill="none" stroke="#3a3a3a">
              <path d="M.5 3V13M15.5 3V13M4 .5H12M4 15.5H12M8 3V13M3 8H13M6 5L8 3L10 5M6 11L8 13L10 11M5 6L3 8L5 10M11 6L13 8L11 10" />
            </svg>
          </ViewButton>
          <ViewButton aria-label="背景">
            <svg width="17" height="13" viewBox="0 0 17 13">
              <rect x="1" y="1" width="15" height="11" fill="none" stroke="#1e1e1e" strokeWidth="1.5" />
              <path d="M2 11L6 6L8 8L11 4L15 9V11Z" fill="#1e1e1e" />
              <circle cx="5" cy="4" r="1" fill="#1e1e1e" />
            </svg>
          </ViewButton>
          <Cluster $gap={2}>
            <ViewButton $off aria-label="镜像">
              <svg width="16" height="13" viewBox="0 0 16 13">
                <path d="M6 2V12H1Z" fill="none" stroke="#2c2c2c" />
                <path d="M9 0V13H16Z" fill="#2c2c2c" />
              </svg>
            </ViewButton>
            <Select label="屏幕尺寸" value="屏幕尺寸" w={66} h={21} pill />
            <Select label="填充屏幕" value="填充屏幕" w={66} h={21} pill />
          </Cluster>
        </Cluster>
      </ViewBar>
    </Surface>
  </ViewportFrame>
);

/* ---------- details ---------- */

const divider = "linear-gradient(#282828, #282828) 189px 0 / 1px 100% no-repeat";

const IdentityRow = styled.div`
  display: flex;
  align-items: center;
  height: 18px;
  margin: 10px 0 11px 10px;
  > input { width: 200px; height: 18px; margin: 0 6px 0 4px; }
  > label { display: flex; align-items: center; gap: 4px; color: ${color.text}; }
  > a {
    margin-left: 18px;
    color: ${color.text};
    text-decoration: none;
    border-bottom: 1px dotted ${color.text};
  }
`;

const Field = styled.input<{ $w?: number }>`
  width: ${(p) => p.$w ?? 214}px;
  height: 18px;
  padding: 0 5px;
  border: 0;
  border-radius: 3px;
  background: #d6d6d6;
  color: #111;
`;

const Check = styled.input<{ $tone?: string }>`
  appearance: none;
  width: 14px;
  height: 14px;
  margin: 0 1px;
  border-radius: 2px;
  background: ${(p) => p.$tone ?? "#cfcfcf"};
  display: grid;
  place-items: center;
  &:checked::after {
    content: "";
    width: 5px;
    height: 9px;
    margin-top: -3px;
    border: solid #3c3c3c;
    border-width: 0 2px 2px 0;
    transform: rotate(42deg);
  }
`;

const MatrixButton = styled.button`
  display: grid;
  place-items: center;
  width: 25px;
  height: 22px;
  margin: 0 2px 0 7px;
  ${raised}
`;

const PropScroll = styled.div`
  flex: 1;
  min-height: 0;
  overflow: hidden;
  margin: 1px 2px 4px;
  background: ${divider};
`;

const Remnant = styled.div`
  height: 8px;
  padding-left: 194px;
  div { width: 44px; height: 4px; background: #8f8f8f; }
`;

const Advanced = styled.button`
  display: grid;
  place-items: center;
  width: 100%;
  height: 14px;
  padding-right: 16px;
  background: #474747;
  border-top: 1px solid #303030;
`;

const Section = styled.h3`
  display: flex;
  align-items: center;
  gap: 4px;
  height: 29px;
  margin: 0;
  padding-left: 3px;
  font-size: 13px;
  font-weight: 500;
  color: #d6d6d6;
  border-radius: 3px 3px 0 0;
  background: ${divider}, ${color.section};
  ${shadow}
`;

const Prop = styled.div<{ $h: number; $hover?: boolean }>`
  display: grid;
  grid-template-columns: 16px 170px minmax(0, 1fr);
  align-items: center;
  height: ${(p) => p.$h}px;
  background: ${(p) => (p.$hover ? `${divider}, #4a4a4a` : "none")};
`;

const PropLabel = styled.div`
  display: flex;
  align-items: center;
  gap: 6px;
  font-size: 11px;
  > svg:last-child:not(:first-child) { margin-left: auto; }
`;

const PropArrow = styled.div`
  padding-left: 4px;
`;

const PropValue = styled.div`
  position: relative;
  display: flex;
  align-items: center;
  gap: 3px;
  padding: 0 18px 0 7px;
  select { font-size: 11px; padding-left: 5px; }
`;

const KeySelect = styled.span`
  display: inline-grid;
  align-items: center;
  width: 58px;
  height: 20px;
  select {
    grid-area: 1 / 1;
    width: 58px;
    height: 20px;
    appearance: none;
    ${raised}
    font-size: 12px;
    padding: 0 3px;
  }
  svg { grid-area: 1 / 1; justify-self: end; margin-right: 5px; pointer-events: none; }
`;

const BindButton = styled.button`
  display: flex;
  align-items: center;
  justify-content: center;
  gap: 3px;
  width: 43px;
  height: 21px;
  margin-left: auto;
  font-size: 11px;
  ${raised}
`;

const Spin = styled.label<{ $w: number }>`
  display: flex;
  align-items: center;
  width: ${(p) => p.$w}px;
  height: 18px;
  padding: 0 5px 0 3px;
  border-radius: 3px;
  background: #d6d6d6;
  color: #111;
  input { flex: 1; min-width: 0; padding: 0; border: 0; background: none; color: #111; height: 18px; }
  span { width: 14px; }
`;

const EventButton = styled.button<{ $h?: number }>`
  display: grid;
  place-items: center;
  width: 150px;
  height: ${(p) => p.$h ?? 20}px;
  color: #dfe9df;
  background: ${color.green};
  border: 1px solid #3f8a40;
  border-radius: 1px;
`;

const Space = styled.div<{ $h: number }>`
  height: ${(p) => p.$h}px;
`;

const KeyMark = () => (
  <svg width="11" height="11" viewBox="0 0 11 11">
    <path d="M5 2L9 6L5 10L1 6Z" fill="#9b9b9b" />
    <path d="M8.5 0V5M6 2.5H11" stroke="#b5b5b5" />
  </svg>
);

const DragMark = () => (
  <svg width="9" height="9" viewBox="0 0 9 9" fill="#111">
    <path d="M4 0H9V5L7.5 3.5L6 5L4 3L5.5 1.5ZM0 4L1.5 5.5L2.5 4.5L4.5 6.5L3.5 7.5L5 9H0Z" />
  </svg>
);

const Plus = ({ s = 12, fill = "#fff" }: { s?: number; fill?: string }) => (
  <svg width={s} height={s} viewBox="0 0 12 12">
    <path d="M4.5 0H7.5V4.5H12V7.5H7.5V12H4.5V7.5H0V4.5H4.5Z" fill={fill} />
  </svg>
);

const EventMark = () => (
  <svg width="15" height="15" viewBox="0 0 15 15">
    <path d="M7.5 1L14 7.5L7.5 14L1 7.5Z" fill="none" stroke="#fff" strokeWidth="1.5" />
    <path d="M7.5 1V4L5 7.5L7.5 11V14L1 7.5Z" fill="#fff" />
  </svg>
);

type RowProps = { label: string; h?: number; mark?: boolean; arrow?: boolean; event?: boolean; hover?: boolean; children?: ReactNode };
const Row = ({ label, h = 25, mark, arrow, event, hover, children }: RowProps) => (
  <Prop $h={h} $hover={hover}>
    <PropArrow>{arrow && <Expander />}</PropArrow>
    <PropLabel>
      {event && <EventMark />}
      <span>{label}</span>
      {mark && <KeyMark />}
    </PropLabel>
    <PropValue>{children}</PropValue>
  </Prop>
);

const Heading = ({ children }: { children: ReactNode }) => (
  <Section>
    <Expander open />
    {children}
  </Section>
);

const Bind = () => (
  <BindButton>
    绑定
    <Caret fill="#000" />
  </BindButton>
);

const More = () => (
  <Advanced aria-label="显示高级">
    <svg width="11" height="8" viewBox="0 0 11 8" fill="#e0e0e0">
      <path d="M0 0H11V1H0ZM0 3H11L5.5 8Z" />
    </svg>
  </Advanced>
);

const Details = () => (
  <Dock>
    <DockTabs>
      <Tab icon="details">细节</Tab>
    </DockTabs>
    <DockBody>
      <IdentityRow>
        <svg width="13" height="10" viewBox="0 0 13 10">
          <rect x=".5" y=".5" width="12" height="8" fill="#cfcfcf" stroke="#f4f4f4" />
        </svg>
        <Field defaultValue="Button_0" aria-label="名称" />
        <label>
          <Check type="checkbox" defaultChecked />
          Is Variable
        </label>
        <a href="#button">打开Button</a>
      </IdentityRow>
      <SearchRow $pad="0 5px 0 4px">
        <Search hint="搜索详情" />
        <MatrixButton aria-label="属性矩阵">
          <svg width="14" height="15" viewBox="0 0 14 15" stroke="#707070" strokeWidth="2">
            <path d="M0 1H4M5 1H9M10 1H14M0 4H4M5 4H9M10 4H14M0 7H4M5 7H9M10 7H14M0 10H4M5 10H9M10 10H14M0 13H4M5 13H9M10 13H14" />
          </svg>
        </MatrixButton>
        <IconButton aria-label="视图选项">
          <svg width="17" height="12" viewBox="0 0 17 12">
            <path d="M0 6Q4 0 8.5 0T17 6Q13 12 8.5 12T0 6Z" fill="#d9dde4" />
            <circle cx="8.5" cy="6" r="4" fill="#5c6f8e" />
            <circle cx="8.5" cy="5" r="1.5" fill="#e8edf5" />
          </svg>
        </IconButton>
        <IconButton aria-label="视图菜单">
          <Caret />
        </IconButton>
      </SearchRow>
      <PropScroll>
        <Remnant>
          <div />
        </Remnant>
        <More />
        <Heading>行为</Heading>
        <Row label="工具提示文本">
          <Field aria-label="工具提示文本" />
          <IconButton aria-label="文本选项">
            <Caret />
          </IconButton>
          <Bind />
        </Row>
        <Row label="已启用" mark>
          <Check type="checkbox" defaultChecked aria-label="已启用" />
          <Bind />
        </Row>
        <Row label="可视性" mark>
          <Select label="可视性" value="可视" w={105} h={21} />
          <Bind />
        </Row>
        <Row label="渲染不透明度" mark>
          <Spin $w={105}>
            <input aria-label="渲染不透明度" defaultValue="1.0" />
            <DragMark />
          </Spin>
        </Row>
        <More />
        <Heading>渲染变换</Heading>
        <Row label="变换" mark arrow />
        <Row label="枢轴" mark arrow>
          <Spin $w={116}>
            <span>X</span>
            <input defaultValue="0.5" />
            <DragMark />
          </Spin>
          <Spin $w={115}>
            <span>Y</span>
            <input defaultValue="0.5" />
            <DragMark />
          </Spin>
        </Row>
        <Space $h={13} />
        <Heading>性能</Heading>
        <Row label="为易变">
          <Check type="checkbox" $tone="#aaaaaa" aria-label="为易变" />
        </Row>
        <Space $h={12} />
        <Heading>裁剪</Heading>
        <Row label="剪切" mark h={26}>
          <Select label="剪切" value="继承" w={105} h={21} />
        </Row>
        <Space $h={13} />
        <Heading>导航</Heading>
        {["向左", "向右", "向上键", "向下", "下一步", "上一步"].map((n) => (
          <Row key={n} label={n} hover={n === "上一步"}>
            <KeySelect>
              <select aria-label={n} defaultValue="Escape">
                <option>Escape</option>
              </select>
              <Caret fill="#000" />
            </KeySelect>
          </Row>
        ))}
        <Space $h={2} />
        <Heading>本地化</Heading>
        <Row label="流方向偏好" h={26}>
          <Select label="流方向偏好" value="继承" w={105} h={21} />
        </Row>
        <Space $h={13} />
        <Heading>事件</Heading>
        <Row label="点击时" event h={27}>
          <EventButton $h={22}>查看</EventButton>
          <Highlight $inset="-9px auto -7px -3px" style={{ width: 175 }} />
        </Row>
        {["按压时", "松开时", "悬停时", "未悬停时"].map((n) => (
          <Row key={n} label={n} event>
            <EventButton aria-label={`添加 ${n}`}>
              <Plus />
            </EventButton>
          </Row>
        ))}
      </PropScroll>
      <ScrollTrack $top={62} $bottom={5} $right={6}>
        <ScrollThumb $size="512px" $end />
      </ScrollTrack>
    </DockBody>
  </Dock>
);

/* ---------- animation list ---------- */

const AddButton = styled.button`
  display: flex;
  align-items: center;
  justify-content: center;
  gap: 3px;
  width: 48px;
  height: 21px;
  color: #eef6ee;
  background: ${color.green};
  border: 1px solid #3f8a40;
  ${shadow}
`;

const Animations = () => (
  <Dock>
    <DockTabs>
      <Tab icon="anim">动画</Tab>
    </DockTabs>
    <DockBody>
      <SearchRow $pad="7px 7px 0 6px">
        <AddButton>
          <Plus s={11} />
          动画
        </AddButton>
        <Search hint="搜索动画" />
      </SearchRow>
    </DockBody>
  </Dock>
);

/* ---------- sequencer ---------- */

const SeqBar = styled.div`
  display: flex;
  align-items: center;
  height: 28px;
  margin-top: 2px;
  padding: 0 11px 0 14px;
  background: #424242;
  color: #8c8c8c;
`;

const SeqButton = styled.button<{ $w: number; $m?: number; $on?: boolean }>`
  display: grid;
  place-items: center;
  width: ${(p) => p.$w}px;
  height: 28px;
  margin-left: ${(p) => p.$m ?? 0}px;
  color: #8c8c8c;
  border-radius: 2px;
  background: ${(p) => (p.$on ? "#8d7c74" : "none")};
`;

const Rule = styled.span<{ $m: string }>`
  width: 2px;
  height: 26px;
  margin: ${(p) => p.$m};
  background: #353535;
`;

const SeqSplit = styled.div`
  display: grid;
  grid-template-columns: 656px minmax(0, 1fr);
  flex: 1;
  min-height: 0;
  padding-right: 2px;
`;

const SeqLeft = styled.div`
  display: flex;
  flex-direction: column;
`;

const SeqFilter = styled.div`
  display: flex;
  align-items: center;
  height: 27px;
  padding: 0 29px 0 8px;
  background: #424242;
  > span { margin-left: 9px; color: #a39186; }
`;

const TrackButton = styled.button`
  display: flex;
  align-items: center;
  justify-content: space-between;
  width: 60px;
  height: 21px;
  padding: 0 3px;
  color: #c0c0c0;
  background: #728773;
  border: 1px solid #627763;
  ${shadow}
`;

const FilterButton = styled.button`
  display: flex;
  align-items: center;
  gap: 3px;
  width: 61px;
  margin: 0 6px;
  color: #9c9c9c;
  ${shadow}
`;

const SeqCount = styled.div`
  margin-top: auto;
  padding: 2px 0 2px 10px;
  color: #9c9c9c;
`;

const Transport = styled.div`
  display: flex;
  align-items: center;
  justify-content: center;
  gap: 8px;
  height: 33px;
  margin-bottom: 2px;
  padding-right: 5px;
  background: #424242;
`;

const SeqRight = styled.div`
  position: relative;
  display: grid;
  grid-template-rows: 27px minmax(0, 1fr) 33px;
  margin-bottom: 2px;
  svg { width: 100%; height: 100%; }
`;

const EmptyNote = styled.div`
  position: absolute;
  left: 0;
  right: 0;
  top: 165px;
  text-align: center;
  font-size: 24px;
  line-height: 30px;
  color: #e2e2e2;
  pointer-events: none;
  text-shadow: 1px 2px 0 #0c0c0c;
`;

const ZERO = 125;
const STEP = 63;
const LAST = 21;
const END = ZERO + STEP * 20;
const tickX = (i: number) => ZERO + i * STEP;

const TimeRuler = ({ bottom }: { bottom?: boolean }) => (
  <svg>
    <rect width="100%" height="100%" fill="#343434" />
    <rect width={ZERO} height="100%" fill="#242424" />
    <rect x={END} width="100%" height="100%" fill="#242424" />
    {range(-2, LAST).map((i) => {
      const dim = i < 0 || i > 19;
      return (
        <g key={i}>
          <rect x={tickX(i)} y={bottom ? 0 : 18} width="1" height="9" fill={dim ? "#5c5c5c" : "#8a8a8a"} />
          {i !== 0 && (
            <text x={tickX(i) + 6} y={bottom ? 11 : 25} fontSize="11" fill={dim ? "#454545" : "#666666"}>
              {(i / 4).toFixed(2)}
            </text>
          )}
        </g>
      );
    })}
    <path
      d={bottom ? `M${ZERO - 6} 32V7L${ZERO} 1L${ZERO + 6} 7V32Z` : `M${ZERO - 6} 1H${ZERO + 6}V20L${ZERO} 26L${ZERO - 6} 20Z`}
      fill="#796966"
    />
    <rect x={ZERO} y="1" width="1" height="100%" fill="#5f7a58" />
    <text x={ZERO + 10} y={bottom ? 30 : 12} fontSize="12" fill="#a8a8a8">
      0.00
    </text>
    <path d={bottom ? `M${END} 28V33H${END - 5}Z` : `M${END} 5V0H${END - 5}Z`} fill="#8a1f1f" />
    <rect x={END - 1} width="1" height="100%" fill="#8a1f1f" />
  </svg>
);

const TrackGrid = () => (
  <svg>
    <rect width="100%" height="100%" fill="#414141" />
    <rect width={ZERO} height="100%" fill="#2d2d2d" />
    <rect x={END} width="100%" height="100%" fill="#2d2d2d" />
    {range(-1, LAST).map((i) => (
      <rect key={i} x={tickX(i)} width="1" height="100%" fill={i < 0 || i > 19 ? "#242424" : "#383838"} />
    ))}
    <rect x={ZERO - 1} width="1" height="100%" fill="#777777" />
    <rect x={ZERO} width="1" height="100%" fill="#347a30" />
    <rect x={END - 1} width="1" height="100%" fill="#8a1f1f" />
  </svg>
);

const transport: [string, number, string][] = [
  ["到起始", 6, "M1 0H3V2L4 3V5H3V15H4V17L3 18H1Z"],
  ["到前端", 20, "M0 9L8 2V16ZM9 2H11V16H9ZM13 2H15V16H13ZM17 2H19V16H17Z"],
  ["上一关键帧", 20, "M0 9L8 2V16ZM10 9L14 4L19 9L14 14ZM12 9L14 12L17 9L14 6Z"],
  ["后退一帧", 14, "M0 9L7 2V16ZM8 2H10V16H8ZM12 2H14V16H12Z"],
  ["倒放", 18, "M1 9L16 0V18Z"],
  ["播放", 18, "M2 0L17 9L2 18Z"],
  ["前进一帧", 14, "M0 2H2V16H0ZM4 2H6V16H4ZM7 2L14 9L7 16Z"],
  ["下一关键帧", 20, "M0 9L5 4L9 9L5 14ZM2 9L5 12L7 9L5 6ZM11 2L19 9L11 16Z"],
  ["到末端", 20, "M0 2H2V16H0ZM4 2H6V16H4ZM8 2H10V16H8ZM12 2L19 9L12 16Z"],
  ["到结束", 6, "M5 0H3V2L2 3V5H3V13L2 15V17L3 18H5Z"],
  ["循环", 17, "M0 8H11V5L16 9L11 13V10H0Z"],
];

const Sequencer = () => (
  <Dock>
    <DockTabs>
      <Tab icon="clip">时间轴</Tab>
      <Tab icon="results" off>
        编译器结果
      </Tab>
    </DockTabs>
    <DockBody>
      <SeqBar>
        <SeqButton $w={18} aria-label="设置">
          <svg width="18" height="18" viewBox="0 0 18 18">
            <path d="M1 4L4 6L6 5V2L4 0Q8-1 9 3Q10 5 8 7L17 15Q17 18 14 17L6 9Q3 10 1 7Z" fill="#909090" />
          </svg>
        </SeqButton>
        <SeqButton $w={18} aria-label="设置菜单">
          <Caret fill="#909090" />
        </SeqButton>
        <SeqButton $w={26} $m={8} aria-label="显示">
          <svg width="23" height="14" viewBox="0 0 23 14">
            <path d="M0 7Q6 0 11.5 0T23 7Q17 14 11.5 14T0 7Z" fill="#909090" />
            <circle cx="11.5" cy="7" r="5.5" fill="#424242" />
            <path d="M11.5 3A4 4 0 1 1 8 7H11.500Z" fill="#909090" />
          </svg>
        </SeqButton>
        <SeqButton $w={10} aria-label="显示菜单">
          <Caret fill="#909090" />
        </SeqButton>
        <SeqButton $w={18} $m={16} aria-label="播放选项">
          <svg width="11" height="14" viewBox="0 0 11 14">
            <path d="M0 0L11 7L0 14Z" fill="#909090" />
          </svg>
        </SeqButton>
        <SeqButton $w={18} aria-label="播放菜单">
          <Caret fill="#909090" />
        </SeqButton>
        <Rule $m="0 7px 0 4px" />
        <SeqButton $w={24} aria-label="关键帧">
          <svg width="20" height="20" viewBox="0 0 20 20">
            <path d="M10 0L20 10L10 20L0 10Z" fill="#999" />
            <path d="M9 3L15 10L9 17L3 10Z" fill="#424242" />
          </svg>
        </SeqButton>
        <SeqButton $w={12} aria-label="关键帧菜单">
          <Caret fill="#909090" />
        </SeqButton>
        <SeqButton $w={24} $m={14} aria-label="自动关键帧">
          <svg width="20" height="20" viewBox="0 0 20 20">
            <path d="M10 0L20 10L10 20L0 10Z" fill="#999" />
            <circle cx="9" cy="7" r="2.5" fill="none" stroke="#3a3a3a" strokeWidth="1.5" />
            <path d="M9 9.5L12 15M11 12L13 11" stroke="#3a3a3a" strokeWidth="1.5" />
          </svg>
        </SeqButton>
        <Rule $m="0 5px 0 9px" />
        <SeqButton $w={32} $on aria-label="对齐">
          <svg width="18" height="20" viewBox="0 0 18 20">
            <path d="M0 14V9A9 9 0 0 1 18 9V14H12V9A3 3 0 0 0 6 9V14ZM0 16H6V20H0ZM12 16H18V20H12Z" fill="#9b9593" />
          </svg>
        </SeqButton>
        <SeqButton $w={30} aria-label="对齐菜单">
          <Caret fill="#909090" />
        </SeqButton>
        <Rule $m="0 4px 0 0" />
        <SeqButton $w={36}>20 fps</SeqButton>
        <SeqButton $w={20} aria-label="帧率菜单">
          <Caret fill="#909090" />
        </SeqButton>
        <Rule $m="0 8px 0 1px" />
        <SeqButton $w={26} aria-label="曲线编辑器">
          <svg width="22" height="20" viewBox="0 0 22 20" fill="none" stroke="#858585">
            <path d="M1 0V18H22" strokeWidth="2" stroke="#6c6c6c" />
            <path d="M2 11Q6 2 11 9T22 13" strokeWidth="1.5" />
          </svg>
        </SeqButton>
        <IconButton aria-label="锁定" style={{ marginLeft: "auto" }}>
          <svg width="13" height="14" viewBox="0 0 13 14">
            <rect x="4" y="7" width="9" height="7" fill="#8a8a8a" />
            <path d="M1 7V3A2 2 0 0 1 5 3V7" fill="none" stroke="#8a8a8a" />
            <path d="M8.5 8V12" stroke="#333" />
          </svg>
        </IconButton>
      </SeqBar>
      <SeqSplit>
        <SeqLeft>
          <SeqFilter>
            <TrackButton>
              <Plus s={11} fill="#b4b4b4" />
              轨道
              <Caret fill="#a8a8a8" />
            </TrackButton>
            <FilterButton>
              <svg width="9" height="11" viewBox="0 0 9 11">
                <path d="M0 0H9V2L6 5V11L3 9V5L0 2Z" fill="#8c8c8c" />
              </svg>
              过滤器
              <Caret fill="#a8a8a8" />
            </FilterButton>
            <Search hint="搜索轨道" dim />
            <span>0.00</span>
          </SeqFilter>
          <SeqCount>0个项目</SeqCount>
          <Transport>
            {transport.map(([name, w, d]) => (
              <IconButton key={name} aria-label={name} style={{ minWidth: w }}>
                <svg width={w} height="18" viewBox={`0 0 ${w} 18`}>
                  <path d={d} fill="#868686" fillRule="evenodd" />
                </svg>
              </IconButton>
            ))}
          </Transport>
        </SeqLeft>
        <SeqRight>
          <TimeRuler />
          <TrackGrid />
          <TimeRuler bottom />
        </SeqRight>
      </SeqSplit>
      <EmptyNote>未选中动画</EmptyNote>
    </DockBody>
  </Dock>
);

/* ---------- floating widgets ---------- */

const RingBadge = styled.div`
  position: absolute;
  right: 60px;
  top: 425px;
  width: 48px;
  height: 48px;
`;

const Monitor = styled.aside`
  position: absolute;
  right: 9px;
  bottom: 11px;
  width: 32px;
  height: 143px;
  padding-top: 11px;
  display: flex;
  flex-direction: column;
  align-items: center;
  border-radius: 4px 0 0 4px;
  background: #282b30;
  color: #fff;
  font-size: 11px;
  line-height: 14px;
  hr { width: 26px; height: 1px; margin: 0; border: 0; background: #34454a; }
`;

const Dot = styled.span`
  width: 10px;
  height: 10px;
  margin-bottom: 11px;
  border-radius: 50%;
  background: #05c36a;
`;

const Gauge = styled.span`
  width: 10px;
  height: 30px;
  margin: 6px 0 7px;
  border-radius: 5px;
  background: linear-gradient(#3d3e44 17px, #b4bb2c 17px, #3ecda0);
`;

const Rates = styled.div`
  padding-top: 6px;
`;

const Rate = styled.div`
  display: grid;
  justify-items: center;
  height: 27px;
  line-height: 14px;
  small {
    display: flex;
    align-items: center;
    gap: 3px;
    font-size: 10px;
    line-height: 10px;
    color: #b8b8b8;
  }
`;

const Watermark = styled.div`
  position: absolute;
  right: 15px;
  bottom: 7px;
  font-size: 14px;
  line-height: 18px;
  color: #c2c2c2;
  text-shadow: 0 0 2px #000;
`;

const RateRow = ({ up }: { up?: boolean }) => (
  <Rate>
    0.1
    <small>
      <svg width="6" height="8" viewBox="0 0 6 8">
        <path
          d={up ? "M3 0L6 4H4V8H2V4H0Z" : "M3 8L6 4H4V0H2V4H0Z"}
          fill={up ? "#2aa4f4" : "#05c36a"}
        />
      </svg>
      K/s
    </small>
  </Rate>
);

/* ---------- page ---------- */

export default function App() {
  return (
    <Desktop>
      <GlobalStyle />
      <Window>
        <TitleBar>
          <svg width="23" height="22" viewBox="0 0 23 22">
            <path
              d="M1 6Q5 2 9 1Q7 3 7 5V15Q7 17 9 17Q11 17 12 15V6L10 4Q13 4 17 1Q16 3 16 5V14Q17 16 20 14Q17 19 14 20L12 18Q10 21 7 21Q3 20 3 16V7Q3 5 1 6Z"
              fill="#f2f2f2"
            />
          </svg>
          <AppTab>ThirdPersonExampleMap*</AppTab>
          <AppTab $on>
            <svg width="18" height="17" viewBox="0 0 18 17">
              <rect width="18" height="17" fill="#33476d" />
              <path d="M2 2L5 3L8 2V5L5 8L2 5ZM2 11H16V13H2ZM8 6H16V8H8Z" fill="#dfe2e8" />
              <rect y="15" width="18" height="2" fill="#2b5fc0" />
            </svg>
            MainMenu*
            <i>×</i>
          </AppTab>
          <WindowButtons>
            <button aria-label="最小化">
              <svg width="10" height="4">
                <rect width="10" height="3" fill="#fff" />
              </svg>
            </button>
            <button aria-label="还原">
              <svg width="10" height="11" viewBox="0 0 10 11" fill="none" stroke="#fff" strokeWidth="1.5">
                <path d="M3 3V1H9V8H7M1 3H7V10H1ZM4 6V7" />
              </svg>
            </button>
            <button aria-label="关闭">
              <svg width="11" height="10" viewBox="0 0 11 10" stroke="#fff" strokeWidth="2.5">
                <path d="M1 1L10 9M10 1L1 9" />
              </svg>
            </button>
          </WindowButtons>
        </TitleBar>
        <MenuBar>
          {["文件", "编辑", "资产", "查看", "调试", "窗口", "帮助"].map((m) => (
            <button key={m}>{m}</button>
          ))}
          <ParentClass>
            父类：
            <a href="#parent">用户控件</a>
          </ParentClass>
        </MenuBar>
        <MainBar>
          <ToolGroup $pad="0 10px 0 1px">
            <Tool $w={54}>
              <CompileIcon />
              编译
            </Tool>
            <DropArrow aria-label="编译选项" style={{ marginLeft: 2 }}>
              <Caret />
            </DropArrow>
          </ToolGroup>
          <ToolGroup $pad="0 8px 0 10px">
            <Tool $w={50}>
              <SaveIcon />
              保存
            </Tool>
            <Tool $w={54}>
              <BrowseIcon />
              浏览
            </Tool>
          </ToolGroup>
          <ToolGroup $pad="0 9px">
            <Tool $w={70}>
              <ReflectorIcon />
              控件反射器
            </Tool>
          </ToolGroup>
          <ToolGroup $pad="0 4px 0 8px">
            <Tool $w={50}>
              <PlayIcon />
              运行
            </Tool>
            <DropArrow aria-label="运行选项" style={{ marginLeft: 4 }}>
              <Caret />
            </DropArrow>
            <DebugFilter>
              <Select label="调试对象" value="未选中调试对象" w={109} h={23} flat />
              调试过滤器
            </DebugFilter>
          </ToolGroup>
          <Modes>
            <button>
              <DesignerIcon />
              设计器
            </button>
            <svg width="8" height="20" viewBox="0 0 8 20" fill="none" stroke="#c0c0c0" strokeWidth="1.5">
              <path d="M1 1L7 10L1 19" />
            </svg>
            <button>
              <GraphIcon />
              图表
            </button>
          </Modes>
        </MainBar>
        <Workspace>
          <UpperRow>
            <LeftStack>
              <Palette />
              <Hierarchy />
            </LeftStack>
            <Viewport />
            <Details />
          </UpperRow>
          <LowerRow>
            <Animations />
            <Sequencer />
          </LowerRow>
        </Workspace>
      </Window>
      <TaskStrip>22:32</TaskStrip>
      <EdgeStrip />
      <Orb>
        <svg width="18" height="16" viewBox="0 0 18 16">
          <path d="M1 4L9 0L17 5L10 10Z" fill="#a9c6ea" />
          <path d="M5 8L10 11L15 8V12L10 16L5 13Z" fill="#3e5f8e" />
          <path d="M2 5V14" stroke="#d9a35c" strokeWidth="1.5" />
        </svg>
      </Orb>
      <RingBadge>
        <svg width="48" height="48" viewBox="0 0 48 48">
          <defs>
            <linearGradient id="ring" x1="0" y1="0" x2="1" y2="1">
              <stop offset="0.15" stopColor="#7fd0dc" />
              <stop offset="0.5" stopColor="#b4b0ea" />
              <stop offset="0.8" stopColor="#f29ccc" />
            </linearGradient>
          </defs>
          <circle cx="24" cy="24" r="22" fill="#777" fillOpacity="0.9" stroke="url(#ring)" strokeWidth="4" />
          <path
            d="M15 15L20 18M33 15L24 21M12 22L20 27V28M36 21L31 25M20 31V37M28 27V37"
            stroke="#0a0a0a"
            strokeWidth="4"
            strokeLinecap="round"
            fill="none"
          />
        </svg>
      </RingBadge>
      <Monitor>
        <Dot />
        <hr />
        <Gauge />
        <hr />
        <Rates>
          <RateRow up />
          <RateRow />
        </Rates>
      </Monitor>
      <Watermark>CSDN @M行者X</Watermark>
    </Desktop>
  );
}
